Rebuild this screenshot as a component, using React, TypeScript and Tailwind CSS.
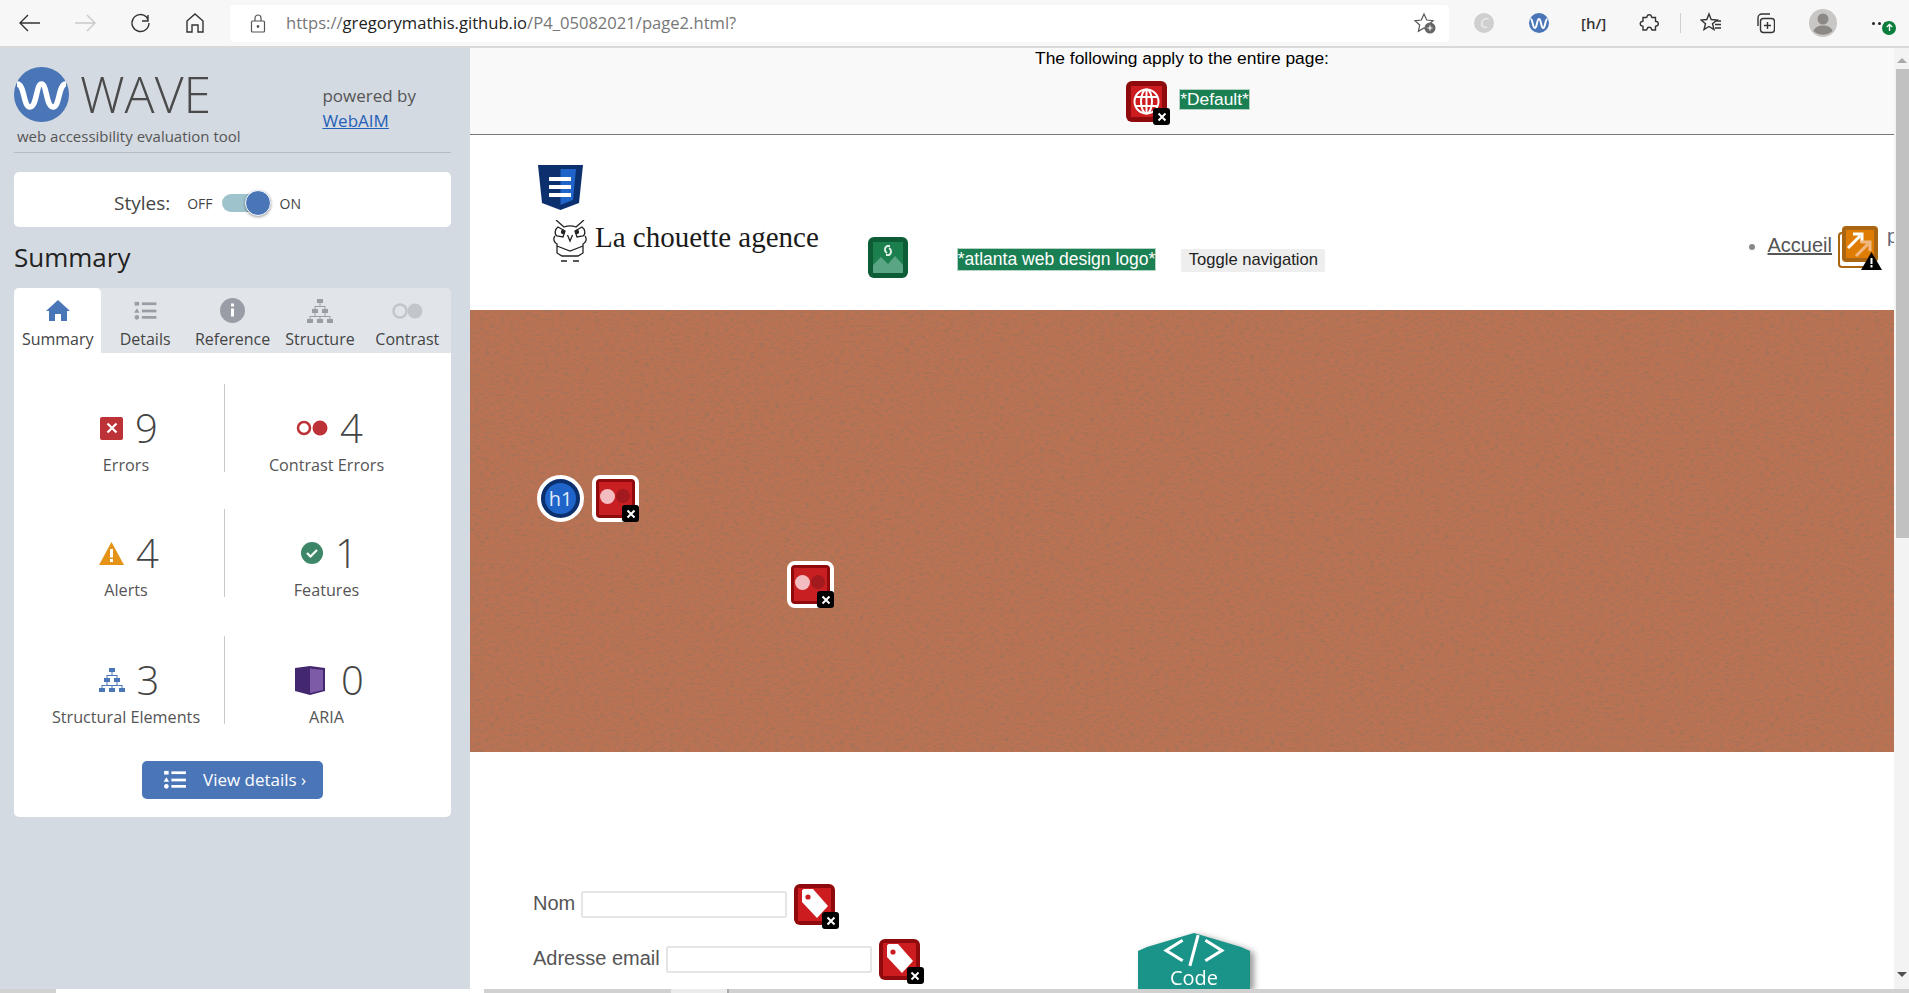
const sans = "font-['Open_Sans',sans-serif]";

function Cross({ className = "" }: { className?: string }) {
  return (
    <span className={`absolute flex h-[17px] w-[17px] items-center justify-center rounded-[3px] bg-black ${className}`}>
      <svg viewBox="0 0 10 10" className="h-[10px] w-[10px]">
        <path d="M1.500 1.500l7 7M8.500 1.500l-7 7" stroke="#fff" strokeWidth="2" />
      </svg>
    </span>
  );
}

function ContrastIcon() {
  return (
    <span className="relative block h-[47px] w-[47px] shrink-0 rounded-[8px] border-[4px] border-white bg-[#8f0a0c] p-[3px]">
      <span className="flex h-full w-full items-center bg-[#c81f22] pb-[5px] pl-[1px]">
        <span className="h-[15px] w-[15px] rounded-full bg-[#f3bcc0]" />
        <span className="ml-[1px] h-[14px] w-[14px] rounded-full bg-[#a31a1e]" />
      </span>
      <Cross className="-bottom-[4px] -right-[4px]" />
    </span>
  );
}

function TagIcon() {
  return (
    <span className="relative block h-[41px] w-[41px] shrink-0 rounded-[6px] bg-[#8f0a0c] p-[4px]">
      <span className="block h-full w-full bg-[#cc1c1f]">
        <svg viewBox="0 0 33 33" className="h-full w-full">
          <path d="M4 3c0-1 1-2 2-2h9l15 17-11 12-15-16z" fill="#fff" />
          <circle cx="10" cy="9" r="2.600" fill="#cc1c1f" />
        </svg>
      </span>
      <Cross className="-bottom-[4px] -right-[4px]" />
    </span>
  );
}

function ListGlyph({ color }: { color: string }) {
  return (
    <svg viewBox="0 0 24 22" className="h-full w-full" fill={color}>
      <rect x="0" y="1" width="5" height="4" />
      <path d="M2.500 8l3 5h-6z" />
      <circle cx="2.500" cy="18" r="2.500" />
      <rect x="8" y="1.500" width="16" height="3" />
      <rect x="8" y="9.500" width="16" height="3" />
      <rect x="8" y="16.500" width="16" height="3" />
    </svg>
  );
}

function TreeGlyph({ color }: { color: string }) {
  return (
    <svg viewBox="0 0 26 24" className="h-full w-full" fill={color}>
      <rect x="10" y="0" width="6" height="4" />
      <rect x="5" y="10" width="6" height="4" />
      <rect x="15" y="10" width="6" height="4" />
      <rect x="0" y="20" width="6" height="4" />
      <rect x="10" y="20" width="6" height="4" />
      <rect x="20" y="20" width="6" height="4" />
      <path d="M12.500 4h1v3h5v3h-1V8h-9v2h-1V7h5zM7.500 14h1v3h9v-3h1v3h5v3h-1v-2h-9v2h-1v-2h-9v2h-1v-3h5z" />
    </svg>
  );
}

function Toolbar() {
  const stroke = { fill: "none", stroke: "#333", strokeWidth: 1.4 };
  return (
    <div className="flex h-[48px] shrink-0 items-center border-b-2 border-[#d9d9d9] bg-[#f7f7f7]">
      <svg viewBox="0 0 22 18" className="ml-[19px] h-[18px] w-[22px]" {...stroke}>
        <path d="M21 9H1M9 1L1 9l8 8" />
      </svg>
      <svg viewBox="0 0 22 18" className="ml-[33px] h-[18px] w-[22px]" fill="none" stroke="#c9c9c9" strokeWidth="1.4">
        <path d="M1 9h20M13 1l8 8-8 8" />
      </svg>
      <svg viewBox="0 0 22 22" className="ml-[34px] h-[22px] w-[22px]" {...stroke}>
        <path d="M18 3v6h-6M19 11a8.500 8.500 0 1 1-2.500-6L18 8" />
      </svg>
      <svg viewBox="0 0 20 20" className="ml-[33px] h-[20px] w-[20px]" {...stroke}>
        <path d="M2 8l8-7 8 7v11h-5v-7H7v7H2z" />
      </svg>
      <div className="ml-[25px] flex h-[37px] w-[1219px] items-center rounded-[4px] bg-white pl-[20px]">
        <svg viewBox="0 0 16 19" className="h-[19px] w-[16px]" fill="none" stroke="#555" strokeWidth="1.2">
          <rect x="1.500" y="7" width="13" height="11" rx="1" />
          <path d="M5 7V4a3 3 0 0 1 6 0v3" />
          <circle cx="8" cy="12.500" r=".8" fill="#555" />
        </svg>
        <span className={`ml-[20px] text-[16.6px] text-[#777] ${sans}`}>
          https://<span className="text-[#222]">gregorymathis.github.io</span>/P4_05082021/page2.html?
        </span>
        <svg viewBox="0 0 24 22" className="ml-auto mr-[12px] h-[22px] w-[24px]">
          <path d="M11 2l2.700 6 6.300.7-4.700 4.300 1.300 6.300L11 16l-5.600 3.300L6.700 13 2 8.700 8.300 8z" fill="none" stroke="#555" strokeWidth="1.200" />
          <circle cx="17" cy="16" r="5.500" fill="#666" />
          <path d="M14.500 16h5M17 13.500v5" stroke="#fff" strokeWidth="1.200" />
        </svg>
      </div>
      <span className="ml-[25px] flex h-[20px] w-[20px] items-center justify-center rounded-full bg-[#cfcfcf] text-[14px] italic leading-none text-[#eee]">C</span>
      <svg viewBox="0 0 20 20" className="ml-[35px] h-[20px] w-[20px]">
        <circle cx="10" cy="10" r="10" fill="#4a76b8" />
        <path d="M1.500 6c2.500 0 2 9 4.300 9S7.800 6 10 6s2 9 4.200 9 1.800-9 4.300-9" fill="none" stroke="#fff" strokeWidth="2" />
      </svg>
      <span className={`ml-[32px] w-[20px] whitespace-nowrap text-center text-[15px] font-semibold leading-none text-[#333] ${sans}`}>[h/]</span>
      <svg viewBox="0 0 20 20" className="ml-[38px] h-[20px] w-[20px]" {...stroke}>
        <path d="M8 3.500a2.300 2.300 0 0 1 4.500 0c0 .8 0 1 .5 1h3.500v3.500c0 .6.400.6 1 .5a2.300 2.300 0 0 1 0 4.500c-.6-.1-1 0-1 .5v3.500h-3.500c-.5 0-.5-.4-.5-1a2.300 2.300 0 0 0-4.500 0c0 .6 0 1-.5 1H4v-3.500c0-.5-.4-.5-1-.5a2.300 2.300 0 0 1 0-4.500c.6 0 1 0 1-.5V4.500h3.500c.5 0 .5-.2.500-1z" />
      </svg>
      <span className="ml-[21px] h-[20px] w-[1px] bg-[#cfcfcf]" />
      <svg viewBox="0 0 22 22" className="ml-[19px] h-[22px] w-[22px]" {...stroke}>
        <path d="M9 2l2.200 5.500 5.800.5-4.500 3.700 1.500 5.800L9 14.500l-5 3 1.500-5.800L1 8l5.800-.5zM15 9h6M15 12.500h6M15 16h6" />
      </svg>
      <svg viewBox="0 0 20 22" className="ml-[33px] h-[22px] w-[20px]" {...stroke}>
        <rect x="5.500" y="6.500" width="14" height="14" rx="3" />
        <path d="M12.500 10v7M9 13.500h7M3 14V6a4 4 0 0 1 4-4h8" />
      </svg>
      <svg viewBox="0 0 28 28" className="ml-[34px] h-[28px] w-[28px]">
        <circle cx="14" cy="14" r="14" fill="#c9c7c5" />
        <circle cx="14" cy="10" r="5.500" fill="#8b8885" />
        <path d="M4.500 22c1.500-4 5-5.500 9.500-5.500s8 1.500 9.500 5.500a14 14 0 0 1-19 0z" fill="#8b8885" />
      </svg>
      <span className="relative ml-[35px] flex gap-[3px]">
        <span className="h-[3px] w-[3px] rounded-full bg-[#222]" />
        <span className="h-[3px] w-[3px] rounded-full bg-[#222]" />
        <span className="h-[3px] w-[3px] rounded-full bg-[#222]" />
        <span className="absolute -right-[9px] -top-[1px] flex h-[14px] w-[14px] items-center justify-center rounded-full bg-[#0a7e3a]">
          <svg viewBox="0 0 10 10" className="h-[9px] w-[9px]" fill="none" stroke="#fff" strokeWidth="1.500">
            <path d="M5 9V1.500M2 4.500l3-3 3 3" />
          </svg>
        </span>
      </span>
    </div>
  );
}

const tabs = ["Summary", "Details", "Reference", "Structure", "Contrast"];

function TabIcon({ name }: { name: string }) {
  if (name === "Summary") {
    return (
      <svg viewBox="0 0 24 22" className="h-[22px] w-[24px]" fill="#4a76b8">
        <path d="M12 0l12 11h-3v10h-6v-7H9v7H3V11H0z" />
      </svg>
    );
  }
  if (name === "Details") {
    return <span className="block h-[20px] w-[23px]"><ListGlyph color="#999ea6" /></span>;
  }
  if (name === "Reference") {
    return (
      <svg viewBox="0 0 25 25" className="h-[25px] w-[25px]">
        <circle cx="12.500" cy="12.500" r="12.500" fill="#999ea6" />
        <rect x="11" y="5.500" width="3" height="3" fill="#fff" />
        <rect x="11" y="10.500" width="3" height="8" fill="#fff" />
      </svg>
    );
  }
  if (name === "Structure") {
    return <span className="block h-[24px] w-[26px]"><TreeGlyph color="#999ea6" /></span>;
  }
  return (
    <svg viewBox="0 0 31 16" className="h-[16px] w-[31px]">
      <circle cx="8" cy="8" r="6.500" fill="none" stroke="#c2c6cb" strokeWidth="2.500" />
      <circle cx="23" cy="8" r="7.500" fill="#c2c6cb" />
    </svg>
  );
}

function Stat({ icon, value, label, className = "" }: { icon: React.ReactNode; value: number; label: string; className?: string }) {
  return (
    <div className={`flex h-[88px] flex-col items-center pt-[24px] ${className}`}>
      <div className="ml-[6px] flex h-[45px] items-center gap-[12px]">
        {icon}
        <span className="text-[40px] font-light leading-none text-[#444]">{value}</span>
      </div>
      <span className="mt-[6px] whitespace-nowrap text-[16.200px] leading-[22px] text-[#555]">{label}</span>
    </div>
  );
}

function Sidebar() {
  return (
    <aside className={`h-full w-[470px] shrink-0 bg-[#d4dae1] pl-[14px] pr-[19px] pt-[19px] ${sans}`}>
      <div className="flex h-[86px] items-start justify-between border-b border-[#b5bbc2]">
        <div>
          <div className="flex items-center">
            <svg viewBox="0 0 55 55" className="h-[55px] w-[55px]">
              <circle cx="27.500" cy="27.500" r="27.500" fill="#4a76b8" />
              <path d="M3 17c8 0 6 23 13 23s6-23 11.500-23S32 40 39 40s5-23 13-23" fill="none" stroke="#fff" strokeWidth="5.500" />
            </svg>
            <span className="ml-[11px] text-[50px] font-light leading-[55px] text-[#4a4a4a]">WAVE</span>
          </div>
          <div className="ml-[3px] mt-[4px] text-[15px] leading-[20px] text-[#555]">web accessibility evaluation tool</div>
        </div>
        <div className="mr-[35px] mt-[16px] text-[17px] leading-[25px] text-[#555]">
          <div>powered by</div>
          <div className="text-[#2560b8] underline">WebAIM</div>
        </div>
      </div>
      <div className="mt-[19px] flex h-[55px] items-center rounded-[5px] bg-white pl-[100px] pt-[7px]">
        <span className="text-[19px] text-[#444]">Styles:</span>
        <span className="ml-[17px] text-[14px] text-[#444]">OFF</span>
        <span className="relative ml-[9px] block h-[18px] w-[49px] rounded-[9px] bg-[#9fc3cc]">
          <span className="absolute -top-[4px] right-0 h-[26px] w-[26px] rounded-full border border-white bg-[#4a76b8] shadow-[0_1px_3px_rgba(0,0,0,0.4)]" />
        </span>
        <span className="ml-[9px] text-[14px] text-[#444]">ON</span>
      </div>
      <h2 className="mt-[12px] h-[49px] text-[26px] leading-[36px] text-[#222]">Summary</h2>
      <div className="flex h-[65px] rounded-t-[5px] bg-[#e1e5ea]">
        {tabs.map((tab, i) => (
          <div
            key={tab}
            className={`flex flex-1 flex-col items-center ${i === 0 ? "rounded-tl-[5px] rounded-tr-[5px] bg-white" : ""}`}
          >
            <div className="flex h-[41px] w-full items-center justify-center pt-[4px]">
              <TabIcon name={tab} />
            </div>
            <span className="text-[16px] leading-[20px] text-[#444]">{tab}</span>
          </div>
        ))}
      </div>
      <div className="flex h-[464px] flex-col rounded-b-[5px] bg-white pl-[14px] pr-[23px] pt-[31px]">
        <div className="grid grid-cols-[197px_203px]">
          <Stat
            className="border-r border-[#c9c9c9]"
            value={9}
            label="Errors"
            icon={
              <span className="flex h-[23px] w-[23px] items-center justify-center rounded-[2px] bg-[#bd3236]">
                <svg viewBox="0 0 12 12" className="h-[12px] w-[12px]">
                  <path d="M1.500 1.500l9 9M10.500 1.500l-9 9" stroke="#fff" strokeWidth="2.200" />
                </svg>
              </span>
            }
          />
          <Stat
            value={4}
            label="Contrast Errors"
            icon={
              <svg viewBox="0 0 32 16" className="h-[16px] w-[32px]">
                <circle cx="8" cy="8" r="6" fill="none" stroke="#bd3236" strokeWidth="2.500" />
                <circle cx="24" cy="8" r="7.500" fill="#bd3236" />
              </svg>
            }
          />
          <Stat
            className="mt-[37px] border-r border-[#c9c9c9]"
            value={4}
            label="Alerts"
            icon={
              <svg viewBox="0 0 25 23" className="h-[23px] w-[25px]">
                <path d="M12.500 0L25 23H0z" fill="#e59218" />
                <rect x="11" y="7" width="3" height="8.500" fill="#fff" />
                <rect x="11" y="17" width="3" height="3" fill="#fff" />
              </svg>
            }
          />
          <Stat
            className="mt-[37px]"
            value={1}
            label="Features"
            icon={
              <svg viewBox="0 0 22 22" className="h-[22px] w-[22px]">
                <circle cx="11" cy="11" r="11" fill="#3d8768" />
                <path d="M6 11l3.500 3.500L16 8" fill="none" stroke="#fff" strokeWidth="2.200" />
              </svg>
            }
          />
          <Stat
            className="mt-[39px] border-r border-[#c9c9c9]"
            value={3}
            label="Structural Elements"
            icon={<span className="block h-[24px] w-[26px]"><TreeGlyph color="#4a76b8" /></span>}
          />
          <Stat
            className="mt-[39px]"
            value={0}
            label="ARIA"
            icon={
              <svg viewBox="0 0 30 29" className="mr-[4px] h-[29px] w-[30px]">
                <path d="M0 2l15-2 15 2v23l-15 4-15-4z" fill="#43286f" />
                <path d="M15 2.500L28 4v20l-13 3z" fill="#7d5ba6" />
              </svg>
            }
          />
        </div>
        <div className="ml-[9px] mt-[37px] flex h-[38px] w-[181px] items-center self-center rounded-[5px] bg-[#4a76b8] pl-[21px]">
          <span className="block h-[20px] w-[24px]"><ListGlyph color="#fff" /></span>
          <span className="ml-[16px] text-[17px] text-white">View details ›</span>
        </div>
      </div>
    </aside>
  );
}

function Owl() {
  return (
    <svg viewBox="0 0 36 42" className="h-[42px] w-[36px]" fill="none" stroke="#222" strokeWidth="1.300">
      <path d="M4 0l8 7c4-1.500 8-1.500 12 0l8-7" />
      <path d="M6 7l7 4-2 6-6-1c-3-2-2-7 1-9zM30 7l-7 4 2 6 6-1c3-2 2-7-1-9z" />
      <circle cx="11" cy="12" r="1.500" fill="#222" />
      <circle cx="25" cy="12" r="1.500" fill="#222" />
      <path d="M15.500 15l2.500 6 2.500-6M3 16c-2.500 3-.5 7 2 8v9l5 3h16l5-3v-9c2.500-1 4.500-5 2-8M5 26l13 5 13-5M9 41h6M21 41h6" />
    </svg>
  );
}

function PageContent() {
  return (
    <div className="relative min-w-0 flex-1 overflow-hidden bg-white font-['Liberation_Sans',sans-serif]">
      <section className="flex h-[87px] flex-col items-center border-b border-[#777] bg-[#f9f9f9]">
        <p className="mt-[-1px] whitespace-nowrap text-[17.400px] leading-[22px] text-black">The following apply to the entire page:</p>
        <div className="ml-[12px] mt-[12px] flex items-start">
          <span className="relative block h-[41px] w-[41px] rounded-[6px] bg-[#8f0a0c] p-[5px]">
            <span className="block h-full w-full bg-[#cc1c1f]">
              <svg viewBox="0 0 31 31" className="h-full w-full" fill="none" stroke="#fff" strokeWidth="2">
                <circle cx="15.500" cy="15.500" r="12" />
                <ellipse cx="15.500" cy="15.500" rx="5.500" ry="12" />
                <path d="M4 11h23M4 20h23M15.500 3.500v24" />
              </svg>
            </span>
            <Cross className="-bottom-[3px] -right-[3px] h-[16px] w-[16px]" />
          </span>
          <span className="ml-[12px] mt-[8px] border border-[#b5d3c4] bg-[#1a7f52] text-[17.400px] leading-[19px] text-white">*Default*</span>
        </div>
      </section>

      <section className="flex h-[175px] items-start">
        <div className="ml-[68px] mt-[30px]">
          <svg viewBox="0 0 45 45" className="h-[45px] w-[45px]">
            <path d="M0 0h45l-4 38-18.500 7L4 38z" fill="#0c2f6d" />
            <path d="M22.500 4H38l-3 31-12.500 5z" fill="#1f65c9" />
            <path d="M11 12h22v4H11zM11 20h22v4H11zM11 28h22v4H11z" fill="#fff" />
          </svg>
          <div className="ml-[14px] mt-[10px] flex items-start">
            <Owl />
            <span className="ml-[7px] whitespace-nowrap font-['Liberation_Serif',serif] text-[29px] leading-[34px] text-[#1a1a1a]">La chouette agence</span>
          </div>
        </div>
        <span className="relative ml-[49px] mt-[102px] block h-[41px] w-[40px] rounded-[6px] bg-[#0e5c36] p-[5px]">
          <span className="block h-full w-full bg-[#1c7f4e]">
            <svg viewBox="0 0 30 31" className="h-full w-full">
              <path d="M0 31V23l8-8 7 7 7-8 8 9v8z" fill="#5aa583" />
              <path d="M17 4h-3a4 4 0 0 0 0 7M13 13h3a4 4 0 0 0 0-7" fill="none" stroke="#dfeee6" strokeWidth="2" />
            </svg>
          </span>
        </span>
        <span className="ml-[49px] mt-[113px] whitespace-nowrap border border-[#b5d3c4] bg-[#1a7f52] text-[17.500px] leading-[21px] text-white">*atlanta web design logo*</span>
        <span className="ml-[25px] mt-[114px] flex h-[23px] w-[144px] items-center justify-center whitespace-nowrap rounded-[2px] bg-[#eeeeee] text-[16.600px] text-[#222]">Toggle navigation</span>
        <div className="ml-auto mt-[91px] flex items-start">
          <span className="mr-[13px] mt-[18px] h-[6px] w-[6px] rounded-full bg-[#888]" />
          <span className="mt-[6px] text-[20px] leading-[26px] text-[#555] underline">Accueil</span>
          <span className="relative ml-[6px] block h-[42px] w-[42px]">
            <span className="absolute bottom-0 left-0 h-[36px] w-[36px] rounded-[4px] border-[2px] border-[#a9650f]" />
            <span className="absolute right-[2px] top-0 block h-[36px] w-[36px] rounded-[4px] bg-[#a9650f] p-[4px]">
              <span className="block h-full w-full bg-[#de7c05]">
                <svg viewBox="0 0 28 28" className="h-full w-full" fill="none" strokeWidth="3">
                  <path d="M2 18L14 6M7 4h9v9" stroke="#fff" />
                  <path d="M10 26L22 14M15 12h9v9" stroke="#f1b981" />
                </svg>
              </span>
            </span>
            <svg viewBox="0 0 21 18" className="absolute -right-[2px] bottom-[-2px] h-[18px] w-[21px]">
              <path d="M10.500 0L21 18H0z" fill="#000" />
              <rect x="9.500" y="6" width="2" height="6" fill="#fff" />
              <rect x="9.500" y="13" width="2" height="2.500" fill="#fff" />
            </svg>
          </span>
          <span className="ml-[7px] w-[7px] overflow-hidden text-[20px] leading-[20px] text-[#667]">p</span>
        </div>
      </section>

      <section className="relative h-[442px] overflow-hidden bg-[#bb7253]">
        <svg className="absolute inset-0 h-full w-full" aria-hidden="true">
          <filter id="paper">
            <feTurbulence type="fractalNoise" baseFrequency="0.2 0.45" numOctaves="4" seed="4" />
            <feColorMatrix values="0 0 0 0 0.35  0 0 0 0 0.17  0 0 0 0 0.1  1.5 1.5 0 0 -1.35" />
          </filter>
          <rect width="100%" height="100%" filter="url(#paper)" />
        </svg>
        <div className="relative pl-[67px] pt-[165px]">
          <div className="flex items-start">
            <span className="flex h-[47px] w-[47px] items-center justify-center rounded-full border-[4px] border-white bg-[#0c2f6d]">
              <span className={`flex h-[31px] w-[31px] items-center justify-center rounded-full bg-[#1f65c9] text-[20px] leading-none text-[#dfeaf8] ${sans}`}>h1</span>
            </span>
            <span className="ml-[8px]"><ContrastIcon /></span>
          </div>
          <div className="ml-[250px] mt-[39px]"><ContrastIcon /></div>
        </div>
      </section>

      <section className="pl-[63px] pt-[132px]">
        <div className="flex h-[41px] items-center">
          <span className="pb-[3px] text-[20px] text-[#555]">Nom</span>
          <span className="ml-[6px] h-[27px] w-[206px] rounded-[2px] border-2 border-[#e5e5e5] bg-white" />
          <span className="ml-[7px]"><TagIcon /></span>
        </div>
        <div className="mt-[14px] flex h-[41px] items-center">
          <span className="pb-[3px] text-[20px] text-[#555]">Adresse email</span>
          <span className="ml-[6px] h-[27px] w-[206px] rounded-[2px] border-2 border-[#e5e5e5] bg-white" />
          <span className="ml-[7px]"><TagIcon /></span>
        </div>
      </section>

      <div className="absolute bottom-0 left-[668px] h-[56px] w-[112px] drop-shadow-[4px_2px_3px_rgba(0,0,0,0.4)]">
        <div className="flex h-full w-full flex-col items-center bg-[#1a9488] pt-[1px] [clip-path:polygon(0_100%,0_32%,8%_25%,50%_0,92%_25%,100%_32%,100%_100%)]">
          <svg viewBox="0 0 62 32" className="h-[33px] w-[64px]" fill="none" stroke="#fff" strokeWidth="3">
            <path d="M20 6L4 16l16 10M42 6l16 10-16 10M35 1l-8 30" />
          </svg>
          <span className={`text-[20px] leading-[22px] text-white ${sans}`}>Code</span>
        </div>
      </div>
    </div>
  );
}

function VerticalScrollbar() {
  return (
    <div className="flex w-[15px] shrink-0 flex-col items-end bg-[#f3f3f3]">
      <div className="flex h-[21px] w-full items-end justify-center pb-[6px]">
        <span className="h-0 w-0 border-x-[5px] border-b-[5px] border-x-transparent border-b-[#a8a8a8]" />
      </div>
      <div className="h-[469px] w-[13px] bg-[#c1c1c1]" />
      <div className="flex-1" />
      <div className="flex h-[17px] w-full items-start justify-center">
        <span className="h-0 w-0 border-x-[5px] border-t-[5px] border-x-transparent border-t-[#505050]" />
      </div>
    </div>
  );
}

function BottomBar() {
  return (
    <div className="flex h-[4px] shrink-0 bg-[#d1d1d1]">
      <div className="ml-[56px] w-[428px] bg-white" />
      <div className="ml-[187px] w-[56px] bg-[#ececec]" />
      <div className="w-[2px] bg-[#aaa]" />
    </div>
  );
}

export default function App() {
  return (
    <div className="flex h-[993px] w-[1909px] flex-col overflow-hidden">
      <Toolbar />
      <div className="flex min-h-0 flex-1">
        <Sidebar />
        <PageContent />
        <VerticalScrollbar />
      </div>
      <BottomBar />
    </div>
  );
}
